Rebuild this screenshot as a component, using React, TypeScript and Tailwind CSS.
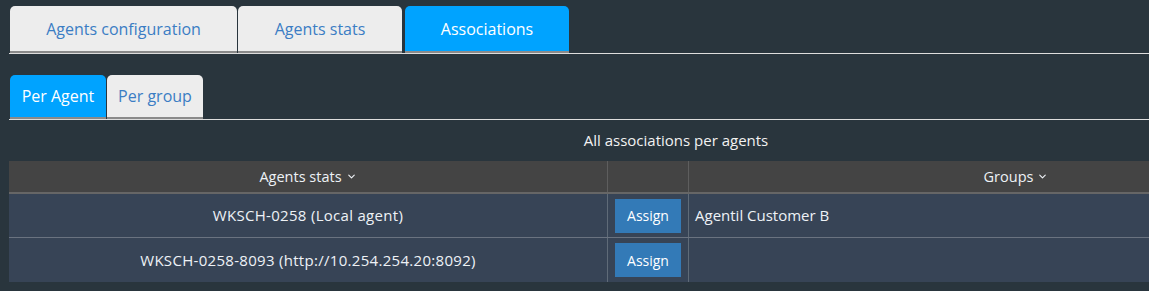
import { ChevronDown } from "lucide-react";

const font = { fontFamily: "'Open Sans', 'DejaVu Sans', sans-serif" };

const TopTab = ({ label, active, w }: { label: string; active?: boolean; w: string }) => (
  <div
    className={`${w} flex h-[47px] items-center justify-center rounded-t-[5px] border-b-2 border-[#8a8a8a] text-[16px] ${
      active ? "bg-[#00a3ff] text-white" : "bg-[#ededed] text-[#3b7dc4]"
    }`}
  >
    {label}
  </div>
);

const SubTab = ({ label, active }: { label: string; active?: boolean }) => (
  <div
    className={`flex h-[44px] w-[96px] items-center justify-center rounded-t-[5px] border-b-2 border-[#8a8a8a] text-[16px] ${
      active ? "bg-[#00a3ff] text-white" : "bg-[#ededed] text-[#3b7dc4]"
    }`}
  >
    {label}
  </div>
);

const rows = [
  { agent: "WKSCH-0258 (Local agent)", group: "Agentil Customer B" },
  { agent: "WKSCH-0258-8093 (http://10.254.254.20:8092)", group: "" },
];

export default function App() {
  return (
    <div className="h-[291px] w-[1149px] overflow-hidden bg-[#29353d] text-[14px]" style={font}>
      {/* main tabs */}
      <div className="pt-[6px] pl-[9px]">
        <div className="flex items-end gap-[1px] pl-[1px]">
          <TopTab label="Agents configuration" w="w-[227px]" />
          <TopTab label="Agents stats" w="w-[164px]" />
          <div className="w-[1px]" />
          <TopTab label="Associations" w="w-[164px]" active />
        </div>
        <div className="h-[1px] bg-[#dddddd]" />
      </div>

      {/* sub tabs */}
      <div className="pt-[21px] pl-[9px]">
        <div className="flex items-end gap-[1px] pl-[1px]">
          <SubTab label="Per Agent" active />
          <SubTab label="Per group" />
        </div>
        <div className="h-[1px] bg-[#dddddd]" />
      </div>

      <div className="flex h-[41px] items-center justify-center pl-[203px] text-[15px] text-[#f2f2f2]">
        All associations per agents
      </div>

      <div className="pl-[9px]">
        <div className="w-[1334px] text-[#eef2f6]">
          <div className="flex h-[33px] border-b-2 border-[#666] bg-[#444444] text-[14.5px]">
            <div className="flex w-[599px] items-center justify-center gap-1 border-r border-[#5e5e5e]">
              Agents stats <ChevronDown size={11} strokeWidth={2.5} />
            </div>
            <div className="w-[81px] border-r border-[#5e5e5e]" />
            <div className="flex flex-1 items-center justify-center gap-1">
              Groups <ChevronDown size={11} strokeWidth={2.5} />
            </div>
          </div>
          {rows.map((r, i) => (
            <div
              key={r.agent}
              className={`flex h-[44px] bg-[#374456] text-[15px] ${i === 0 ? "border-b border-[#6a7380]" : ""}`}
            >
              <div className="flex w-[599px] items-center justify-center border-r border-[#5f6b78] tracking-[0.3px]">
                {r.agent}
              </div>
              <div className="flex w-[81px] items-center justify-center border-r border-[#5f6b78]">
                <div className="flex h-[34px] w-[66px] items-center justify-center bg-[#337ab7] text-[14px] text-white">
                  Assign
                </div>
              </div>
              <div className="flex flex-1 items-center pl-[6px]">{r.group}</div>
            </div>
          ))}
        </div>
      </div>
    </div>
  );
}
